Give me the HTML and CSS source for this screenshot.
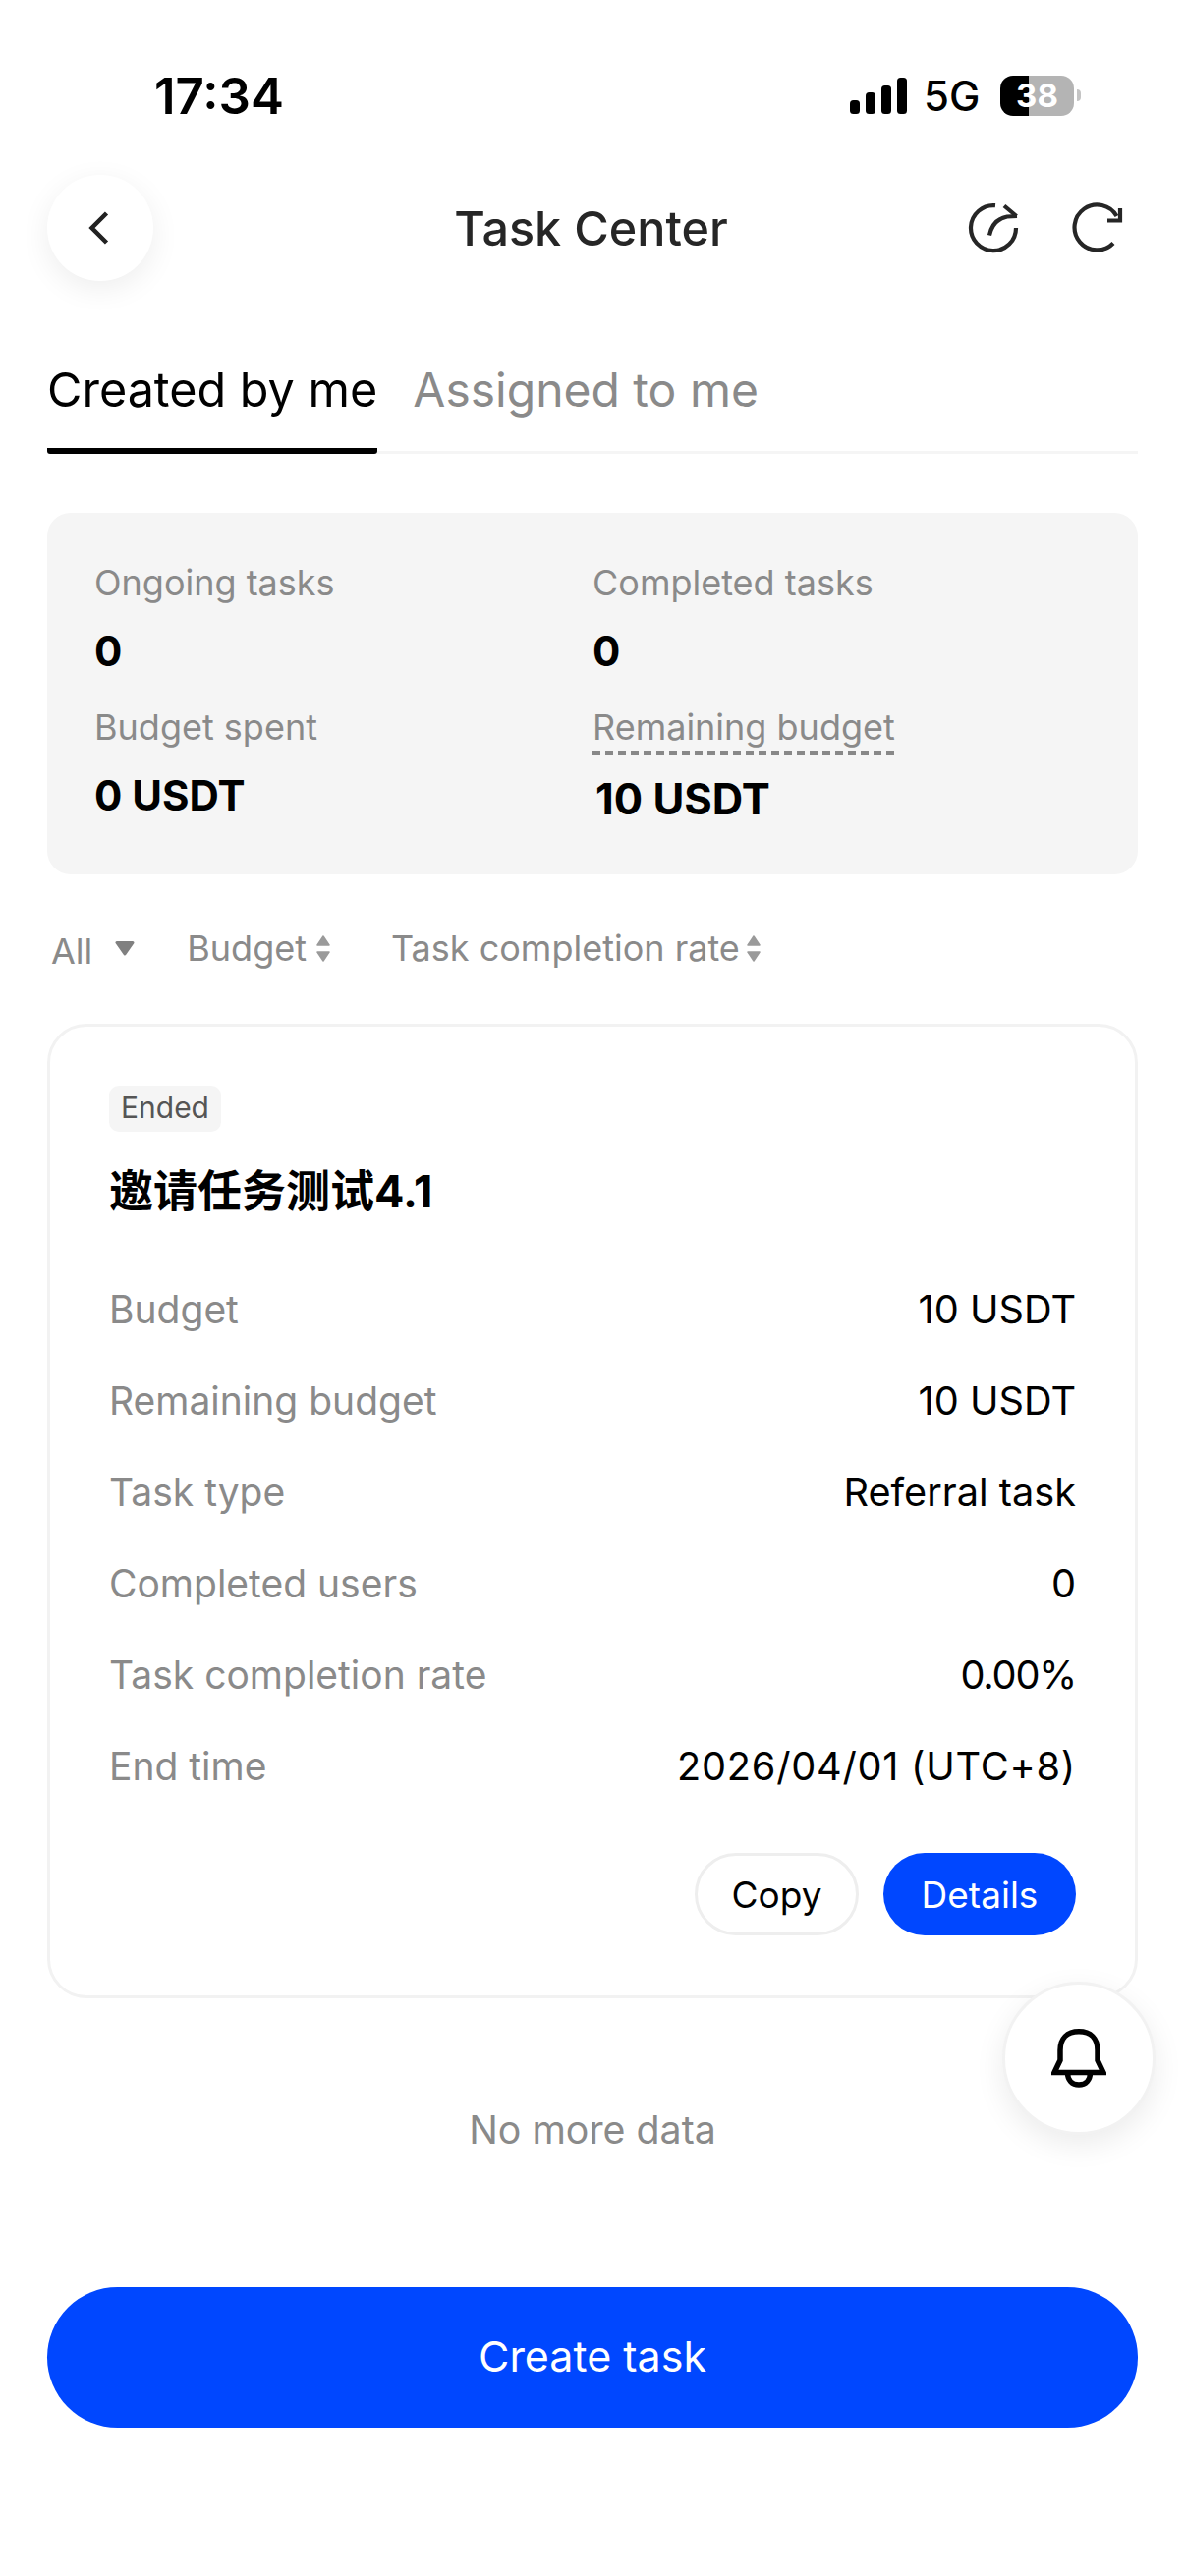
FILE: index.html
```html
<!DOCTYPE html>
<html lang="en">
<head>
  <meta charset="UTF-8">
  <meta name="viewport" content="width=device-width, initial-scale=1.0">
  <title>Task Center</title>
  <link rel="stylesheet" href="styles.css">
</head>
<body>
  <div class="status-bar">
    <span class="time">17:34</span>
    <div class="status-icons">
      <svg class="signal" width="58" height="37" viewBox="0 0 58 37" fill="#000">
        <rect x="0" y="23" width="10" height="14" rx="3.5"/>
        <rect x="16" y="15" width="10" height="22" rx="3.5"/>
        <rect x="32" y="8" width="10" height="29" rx="3.5"/>
        <rect x="48" y="0" width="10" height="37" rx="3.5"/>
      </svg>
      <span class="network">5G</span>
      <div class="battery"><span>38</span></div>
      <span class="battery-cap"></span>
    </div>
  </div>

  <div class="nav">
    <button class="back-btn">
      <svg width="30" height="36" viewBox="0 0 30 36" fill="none" stroke="#222" stroke-width="4.5">
        <path d="M21.5 3 L6.5 18 L21.5 33"/>
      </svg>
    </button>
    <h1>Task Center</h1>
    <div class="nav-actions">
      <svg width="60" height="60" viewBox="0 0 60 60" fill="none" stroke="#262626" stroke-width="4.2">
        <path d="M32 7.2 A23 23 0 1 0 53 30"/>
        <path d="M26 37.5 C28 28 34 20.5 44 18.5 L54 18"/>
        <path d="M41 7.5 L53.5 18"/>
      </svg>
      <svg width="60" height="60" viewBox="0 0 60 60" fill="none" stroke="#262626" stroke-width="4.2">
        <path d="M47 45.5 A23 23 0 1 1 50.5 18"/>
        <path d="M54 10 V22.5 H41"/>
      </svg>
    </div>
  </div>

  <div class="tabs">
    <div class="tab active">Created by me</div>
    <div class="tab">Assigned to me</div>
  </div>

  <div class="stats">
    <div class="stat">
      <div class="stat-label">Ongoing tasks</div>
      <div class="stat-value">0</div>
    </div>
    <div class="stat">
      <div class="stat-label">Completed tasks</div>
      <div class="stat-value">0</div>
    </div>
    <div class="stat">
      <div class="stat-label">Budget spent</div>
      <div class="stat-value">0 USDT</div>
    </div>
    <div class="stat">
      <div class="stat-label dashed">Remaining budget</div>
      <div class="stat-value stat-value-lg">10 USDT</div>
    </div>
  </div>

  <div class="filters">
    <div class="filter filter-all">
      All
      <svg width="20" height="15" viewBox="0 0 20 15" fill="#808080" stroke="#808080" stroke-width="3" stroke-linejoin="round"><path d="M2 1.5 H18 L10 13 Z"/></svg>
    </div>
    <div class="filter filter-budget">
      Budget
      <svg width="14" height="27" viewBox="0 0 14 27" fill="#9a9a9a" stroke="#9a9a9a" stroke-width="1.5" stroke-linejoin="round"><path d="M7 1 L13 10 H1 Z M7 26 L1 17 H13 Z"/></svg>
    </div>
    <div class="filter filter-rate">
      Task completion rate
      <svg width="14" height="27" viewBox="0 0 14 27" fill="#9a9a9a" stroke="#9a9a9a" stroke-width="1.5" stroke-linejoin="round"><path d="M7 1 L13 10 H1 Z M7 26 L1 17 H13 Z"/></svg>
    </div>
  </div>

  <div class="task-card">
    <span class="chip">Ended</span>
    <h2>邀请任务测试4.1</h2>
    <div class="rows">
      <div class="row"><span>Budget</span><b>10 USDT</b></div>
      <div class="row"><span>Remaining budget</span><b>10 USDT</b></div>
      <div class="row"><span>Task type</span><b>Referral task</b></div>
      <div class="row"><span>Completed users</span><b>0</b></div>
      <div class="row"><span>Task completion rate</span><b class="rate">0.00%</b></div>
      <div class="row"><span>End time</span><b class="date">2026/04/01 (UTC+8)</b></div>
    </div>
    <div class="card-actions">
      <button class="btn btn-outline">Copy</button>
      <button class="btn btn-primary">Details</button>
    </div>
  </div>

  <div class="no-more">No more data</div>

  <button class="create-btn">Create task</button>

  <button class="bell-btn">
    <svg width="56" height="60" viewBox="0 0 56 60" fill="none" stroke="#000" stroke-width="5.5">
      <path d="M3 44.5 L9 32 V22 C9 10 16 2.8 28 2.8 C40 2.8 47 10 47 22 V32 L53 44.5 Z"/>
      <path d="M16.5 44.5 C16.5 52 21 57 28 57 C35 57 39.5 52 39.5 44.5"/>
    </svg>
  </button>
</body>
</html>
```

FILE: styles.css
```css
:root {
  --primary-color: #0047ff;
  --text-color: #000000;
  --title-color: #262626;
  --muted-color: #8a8a8a;
  --surface-color: #f5f5f5;
  --border-color: #f2f2f2;
}

* {
  box-sizing: border-box;
}

body {
  position: relative;
  font-family: Inter, 'Noto Sans CJK SC', sans-serif;
  width: 1206px;
  height: 2622px;
  margin: 0;
  padding: 0;
  overflow: hidden;
  background-color: #ffffff;
  color: var(--text-color);
}

button {
  font-family: inherit;
  cursor: pointer;
}

/* status bar */
.status-bar {
  height: 74px;
  margin-top: 60px;
  padding: 0 106px 0 157px;
  display: flex;
  align-items: center;
  justify-content: space-between;
}

.time {
  font-size: 51px;
  font-weight: 600;
}

.status-icons {
  display: flex;
  align-items: center;
}

.signal {
  margin-right: 17px;
}

.network {
  font-size: 42px;
  font-weight: 500;
  width: 78px;
}

.battery {
  width: 75px;
  height: 41px;
  border-radius: 13px;
  background: linear-gradient(to right, #000 39%, #b4b4b4 39%);
  color: #fff;
  font-size: 33px;
  font-weight: 700;
  line-height: 41px;
  text-align: center;
}

.battery-cap {
  width: 4px;
  height: 12px;
  margin-left: 3px;
  background-color: #c4c4c4;
  border-radius: 0 6px 6px 0;
}

/* nav */
.nav {
  height: 108px;
  margin: 44px 48px 0;
  display: flex;
  align-items: center;
  justify-content: space-between;
}

.nav h1 {
  flex: 1;
  margin: 0;
  padding-left: 66px;
  font-size: 48.5px;
  font-weight: 450;
  text-align: center;
  color: var(--title-color);
}

.back-btn {
  width: 108px;
  height: 108px;
  padding: 0;
  border: none;
  border-radius: 50%;
  background-color: #fff;
  box-shadow: 0 8px 30px rgba(0, 0, 0, 0.07);
  display: flex;
  align-items: center;
  justify-content: center;
}

.nav-actions {
  display: flex;
  gap: 45px;
  margin-right: 12px;
}

/* tabs */
.tabs {
  margin: 54px 48px 0;
  height: 122px;
  display: flex;
  gap: 36px;
  border-bottom: 3px solid var(--surface-color);
}

.tab {
  font-size: 48px;
  line-height: 114px;
  height: 122px;
  color: var(--muted-color);
}

.tab.active {
  font-size: 48.5px;
  color: var(--text-color);
  border-bottom: 6px solid #000;
  border-radius: 0 0 3px 3px;
}

/* stats */
.stats {
  margin: 60px 48px 0;
  height: 368px;
  padding: 49px 48px 0;
  background-color: var(--surface-color);
  border-radius: 24px;
  display: grid;
  grid-template-columns: 507px 1fr;
  grid-auto-rows: min-content;
  row-gap: 33px;
}

.stat-label {
  font-size: 36px;
  line-height: 44px;
  color: var(--muted-color);
}

.stat-label.dashed {
  width: fit-content;
  margin-bottom: -3px;
  padding-bottom: 6px;
  background: repeating-linear-gradient(to right, #888 0 8px, transparent 8px 13px) left bottom / 100% 4px no-repeat;
}

.stat-value {
  margin-top: 26px;
  font-size: 42px;
  line-height: 44px;
  font-weight: 700;
}

.stat-value-lg {
  margin-left: 3px;
  font-size: 43.5px;
}

/* filters */
.filters {
  height: 60px;
  margin-top: 45px;
  padding-left: 52px;
  display: flex;
  align-items: center;
  font-size: 36px;
  color: var(--muted-color);
}

.filter {
  display: flex;
  align-items: center;
  gap: 10px;
}

.filter-all {
  gap: 23px;
  margin-right: 53px;
  padding-top: 6px;
}

.filter-all svg {
  margin-top: -5px;
}

.filter-budget {
  margin-right: 62px;
}

.filter-rate {
  gap: 7px;
}

/* task card */
.task-card {
  margin: 47px 48px 0;
  height: 992px;
  padding: 60px 60px 0 60px;
  border: 3px solid var(--border-color);
  border-radius: 40px;
}

.chip {
  display: inline-block;
  height: 47px;
  padding: 0 12px;
  font-size: 30px;
  line-height: 44px;
  color: #555;
  background-color: var(--surface-color);
  border-radius: 10px;
}

.task-card h2 {
  margin: 31px 0 0;
  font-size: 45px;
  line-height: 60px;
  font-weight: 700;
}

.rows {
  margin-top: 43px;
}

.row {
  height: 93px;
  display: flex;
  align-items: center;
  justify-content: space-between;
  font-size: 39px;
  color: var(--muted-color);
}

.row b {
  font-size: 39.7px;
  font-weight: 400;
  color: var(--text-color);
}

.row .rate {
  letter-spacing: -1.2px;
}

.row .date {
  letter-spacing: 0.75px;
}

.card-actions {
  margin-top: 42px;
  display: flex;
  justify-content: flex-end;
  gap: 25px;
}

.btn {
  height: 84px;
  border-radius: 42px;
  font-size: 37px;
  padding: 0;
}

.btn-outline {
  width: 167px;
  background-color: #fff;
  color: var(--text-color);
  border: 3px solid #eeeeee;
}

.btn-primary {
  width: 196px;
  background-color: var(--primary-color);
  color: #fff;
  border: none;
}

.no-more {
  margin-top: 104px;
  font-size: 39.3px;
  line-height: 60px;
  text-align: center;
  color: var(--muted-color);
}

.create-btn {
  display: block;
  width: 1110px;
  height: 143px;
  margin: 130px 48px 0;
  padding: 0 0 3px;
  border: none;
  border-radius: 72px;
  background-color: var(--primary-color);
  color: #fff;
  font-size: 43px;
  font-weight: 400;
}

/* floats over the list */
.bell-btn {
  position: absolute;
  left: 1020px;
  top: 2017px;
  width: 156px;
  height: 156px;
  padding: 0;
  border: 3px solid var(--border-color);
  border-radius: 50%;
  background-color: #fff;
  box-shadow: 0 10px 30px rgba(0, 0, 0, 0.08);
  display: flex;
  align-items: center;
  justify-content: center;
}
```
